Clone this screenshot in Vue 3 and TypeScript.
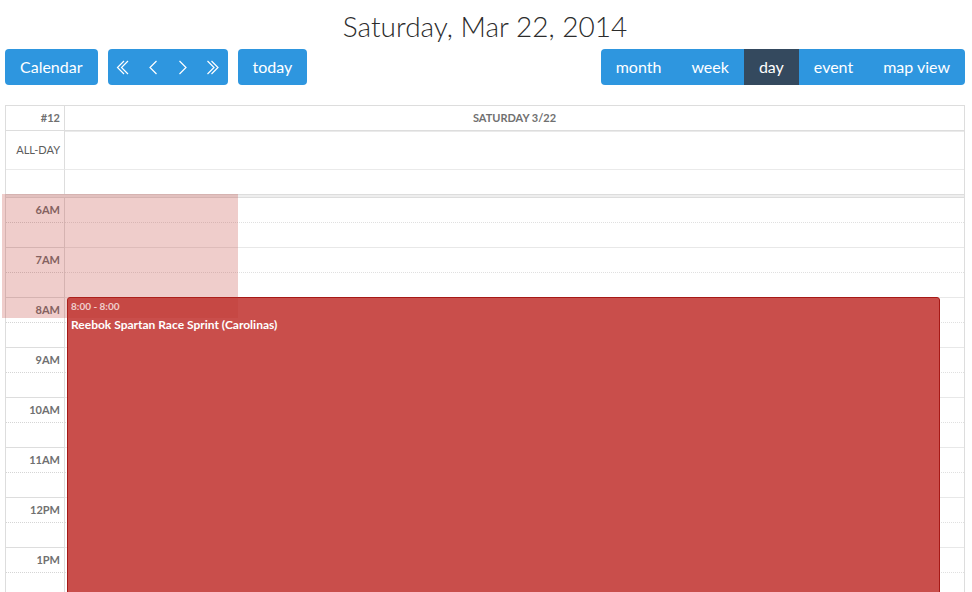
<script setup lang="ts">
import { ref } from 'vue'

interface NavButton {
  label: string
  paths: string[]
}

const navButtons: NavButton[] = [
  { label: 'Previous year', paths: ['M8 1 1.5 7.5 8 14', 'M12 1 5.5 7.5 12 14'] },
  { label: 'Previous day', paths: ['M10.5 1 4 7.5 10.5 14'] },
  { label: 'Next day', paths: ['M3.5 1 10 7.5 3.5 14'] },
  { label: 'Next year', paths: ['M1.5 1 8 7.5 1.5 14', 'M5.5 1 12 7.5 5.5 14'] },
]

const views = ['month', 'week', 'day', 'event', 'map view']
const activeView = ref('day')

const hours = ['6am', '7am', '8am', '9am', '10am', '11am', '12pm', '1pm']
</script>

<template>
  <main class="calendar">
    <h1 class="title">Saturday, Mar 22, 2014</h1>

    <div class="toolbar">
      <button type="button" class="btn single">Calendar</button>
      <div class="group">
        <button v-for="nav in navButtons" :key="nav.label" type="button" class="btn nav" :aria-label="nav.label">
          <svg width="13" height="15" viewBox="0 0 13 15" aria-hidden="true">
            <path v-for="d in nav.paths" :key="d" :d="d" />
          </svg>
        </button>
      </div>
      <button type="button" class="btn single">today</button>
      <div class="group views">
        <button
          v-for="view in views"
          :key="view"
          type="button"
          class="btn"
          :class="{ active: view === activeView }"
          :aria-pressed="view === activeView"
          @click="activeView = view"
        >{{ view }}</button>
      </div>
    </div>

    <section class="agenda">
      <table class="head">
        <thead>
          <tr class="day-row">
            <th class="axis" scope="col">#12</th>
            <th scope="col">Saturday 3/22</th>
          </tr>
        </thead>
        <tbody>
          <tr class="all-day">
            <th class="axis" scope="row">all-day</th>
            <td></td>
          </tr>
          <tr class="spare">
            <td class="axis"></td>
            <td></td>
          </tr>
        </tbody>
      </table>

      <div class="time-grid">
        <div class="divider"></div>
        <div class="slots">
          <table>
            <tbody v-for="hour in hours" :key="hour">
              <tr class="hour">
                <th class="axis" scope="row">{{ hour }}</th>
                <td></td>
              </tr>
              <tr class="half">
                <td class="axis"></td>
                <td></td>
              </tr>
            </tbody>
          </table>
          <article class="event">
            <div class="event-time">8:00 - 8:00</div>
            <div class="event-name">Reebok Spartan Race Sprint (Carolinas)</div>
          </article>
        </div>
        <div class="drag-area"></div>
      </div>
    </section>
  </main>
</template>

<style>
body {
  background: #fff;
}
</style>

<style scoped>
.calendar {
  box-sizing: border-box;
  display: flex;
  flex-direction: column;
  height: 100vh;
  padding: 5px 7px 0 5px;
  overflow: hidden;
  color: #2c2c2c;
  font-family: Lato, "Liberation Sans", sans-serif;
}

.title {
  flex: none;
  margin: 0 0 2px;
  font-size: 28px;
  font-weight: 300;
  line-height: 42px;
  text-align: center;
}

.toolbar {
  display: flex;
  flex: none;
  gap: 10px;
  margin-bottom: 20px;
}

.group {
  display: flex;
  overflow: hidden;
  border-radius: 4px;
}

.views {
  margin-left: auto;
}

.btn {
  height: 36px;
  padding: 0 15px;
  border: 0;
  background: #2e96df;
  color: #fff;
  font: 400 16px/36px Lato, "Liberation Sans", sans-serif;
  cursor: pointer;
}

.btn.single {
  border-radius: 4px;
}

.btn.active {
  background: #34495e;
}

.btn.nav {
  display: flex;
  align-items: center;
  justify-content: center;
  width: 30px;
  padding: 0;
}

.nav svg {
  fill: none;
  stroke: #fff;
  stroke-width: 1.2;
}

.agenda {
  flex: 1;
  min-height: 0;
}

table {
  width: 100%;
  border-right: 1px solid #ddd;
  border-left: 1px solid #ddd;
  border-spacing: 0;
  table-layout: fixed;
}

th,
td {
  box-sizing: border-box;
  padding: 0;
  color: #707070;
  font-size: 11px;
  font-weight: 700;
  line-height: 16px;
  text-transform: uppercase;
}

.axis {
  width: 59px;
  padding-right: 4px;
  border-right: 1px solid #ddd;
  text-align: right;
}

.day-row th {
  height: 26px;
  border-top: 1px solid #ddd;
  border-bottom: 1px solid #ddd;
}

.all-day .axis {
  color: #5c5c5c;
  font-weight: 400;
}

.all-day > * {
  height: 39px;
  border-bottom: 1px solid #eaeaea;
}

.all-day > td {
  border-top: 1px solid #eaeaea;
}

.spare td {
  height: 24px;
}

.time-grid {
  position: relative;
}

.divider {
  box-sizing: border-box;
  height: 3px;
  border: solid #ddd;
  border-width: 1px 1px 0;
  background: #eee;
}

.slots {
  position: relative;
}

.hour > *,
.half > * {
  height: 25px;
  border-top: 1px solid #e8e8e8;
}

.hour > .axis,
tbody:first-child > .hour > td {
  border-top-color: #ddd;
}

.half > * {
  border-top-style: dotted;
}

.half > .axis {
  border-top-color: #d5d5d5;
}

.half > td {
  border-top-color: #e0e0e0;
}

.event {
  box-sizing: border-box;
  position: absolute;
  top: 100px;
  right: 25px;
  bottom: 0;
  left: 62px;
  padding: 0 3px;
  border: 1px solid #a61916;
  border-radius: 3px;
  background: #c94e4b;
  color: #fff;
}

.event-time {
  margin-bottom: 2px;
  font-size: 10px;
  font-weight: 700;
  line-height: 16px;
}

.event-name {
  font-size: 12px;
  font-weight: 700;
  line-height: 18px;
}

.drag-area {
  position: absolute;
  top: 0;
  left: -3px;
  width: 236px;
  height: 124px;
  background: rgb(191 54 48 / 25%);
}
</style>
